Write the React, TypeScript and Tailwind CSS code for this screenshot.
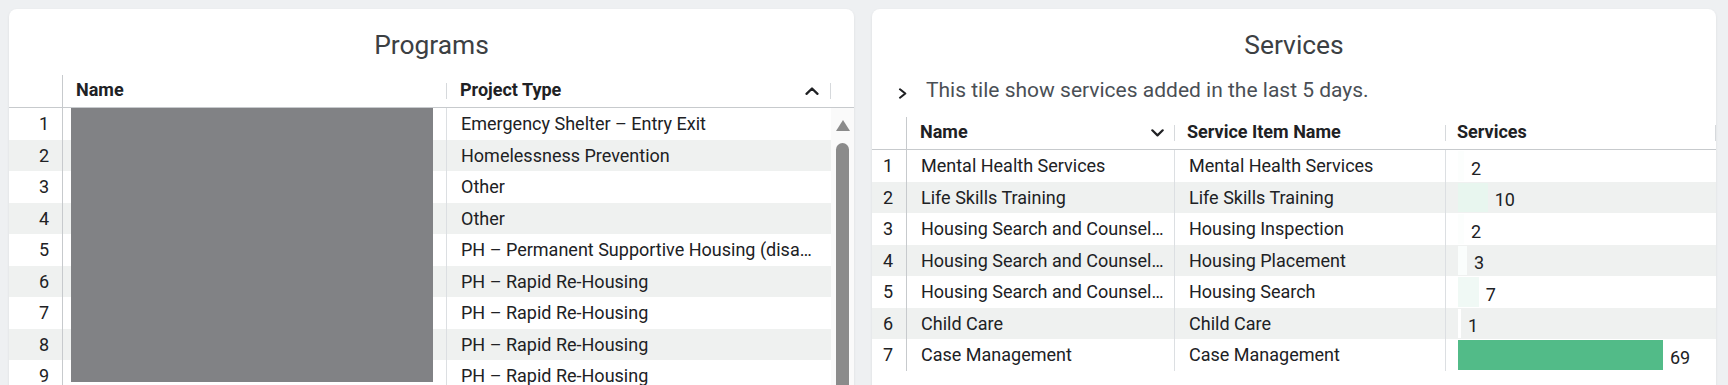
import React from 'react';

// Two dashboard tiles: Programs list and Services added in the last 5 days

const programTypes = [
    'Emergency Shelter – Entry Exit',
    'Homelessness Prevention',
    'Other',
    'Other',
    'PH – Permanent Supportive Housing (disability required for entry)',
    'PH – Rapid Re-Housing',
    'PH – Rapid Re-Housing',
    'PH – Rapid Re-Housing',
    'PH – Rapid Re-Housing',
];

const services = [
    { name: 'Mental Health Services', item: 'Mental Health Services', count: 2 },
    { name: 'Life Skills Training', item: 'Life Skills Training', count: 10 },
    { name: 'Housing Search and Counseling Services', item: 'Housing Inspection', count: 2 },
    { name: 'Housing Search and Counseling Services', item: 'Housing Placement', count: 3 },
    { name: 'Housing Search and Counseling Services', item: 'Housing Search', count: 7 },
    { name: 'Child Care', item: 'Child Care', count: 1 },
    { name: 'Case Management', item: 'Case Management', count: 69 },
];

const MAX_COUNT = 69;
const MIN_COUNT = 1;
const BAR_MAX_WIDTH = 205;

// white -> green scale, like the data bar colouring in the tile
const barColor = (value: number): string => {
    const t = (value - MIN_COUNT) / (MAX_COUNT - MIN_COUNT);
    const mix = (c: number) => Math.round(255 - (255 - c) * t);
    return `rgb(${mix(82)}, ${mix(187)}, ${mix(136)})`;
};

const ChevronUp = () => (
    <svg width="14" height="8" viewBox="0 0 14 8" fill="none">
        <path d="M1.5 6.8 7 1.5l5.5 5.3" stroke="#202124" strokeWidth="2.3" strokeLinecap="round" strokeLinejoin="round" />
    </svg>
);

const ChevronDown = () => (
    <svg width="13" height="8" viewBox="0 0 13 8" fill="none">
        <path d="M1.3 1.3 6.5 6.4l5.2-5.1" stroke="#202124" strokeWidth="2.2" strokeLinecap="round" strokeLinejoin="round" />
    </svg>
);

const ChevronRight = () => (
    <svg width="10" height="11" viewBox="0 0 10 11" fill="none">
        <path d="M2 1.3 7.3 5.5 2 9.7" stroke="#202124" strokeWidth="2.1" strokeLinecap="round" strokeLinejoin="round" />
    </svg>
);

const HeaderSep = () => <div className="w-px h-[16px] bg-[#d6d9dc] shrink-0 mt-[2px]" />;

const ProgramsTile = () => (
    <div className="w-[845px] h-[400px] shrink-0 rounded-lg bg-white shadow-[0_1px_3px_rgba(0,0,0,0.08)] overflow-hidden">
        <div className="h-[66px] pt-[20px] text-center text-[26.4px] leading-[32px] font-normal text-[#3c4043]">Programs</div>
        <div className="flex h-[33px] border-b border-[#c7cacd] text-[18px] font-bold text-[#202124]">
            <div className="w-[54px] border-r border-[#c7cacd]" />
            <div className="w-[384px] flex items-center justify-between pl-[13px] pb-[3px]">
                <span>Name</span>
                <HeaderSep />
            </div>
            <div className="w-[384px] flex items-center pl-[13px] pb-[3px]">
                <span className="flex-1">Project Type</span>
                <div className="mt-[2px]">
                    <ChevronUp />
                </div>
                <div className="ml-[11px]">
                    <HeaderSep />
                </div>
            </div>
        </div>
        <div className="flex">
            <div className="w-[822px] relative">
                {programTypes.map((type, i) => (
                    <div
                        key={i}
                        className={`flex h-[31.5px] text-[18px] text-[#202124] ${i % 2 === 1 ? 'bg-[#eff1f0]' : 'bg-white'}`}
                    >
                        <div className="w-[54px] border-r border-[#c7cacd] flex items-center justify-end pr-[13px]">{i + 1}</div>
                        <div className="w-[384px] border-r border-[#dcdfe2]" />
                        <div className="w-[384px] flex items-center pl-[14px] pr-[18px] min-w-0">
                            <span className="truncate">{type}</span>
                        </div>
                    </div>
                ))}
                {/* redacted name column */}
                <div className="absolute top-0 left-[62px] w-[362px] h-[274px] bg-[#818285]" />
            </div>
            <div className="w-[23px] bg-[#fafafa] flex flex-col items-center pt-[12px]">
                <div className="w-0 h-0 border-l-[7.5px] border-r-[7.5px] border-b-[11px] border-l-transparent border-r-transparent border-b-[#8b8b8b]" />
                <div className="mt-[12px] w-[13px] h-[260px] rounded-full bg-[#8b8b8b]" />
            </div>
        </div>
    </div>
);

const ServicesTile = () => (
    <div className="w-[844px] h-[400px] shrink-0 rounded-lg bg-white shadow-[0_1px_3px_rgba(0,0,0,0.08)] overflow-hidden">
        <div className="h-[66px] pt-[20px] text-center text-[26.4px] leading-[32px] font-normal text-[#3c4043]">Services</div>
        <div className="h-[42px] pt-[1px] flex items-start pl-[26px]">
            <div className="h-[28px] flex items-center pt-[7px]">
                <ChevronRight />
            </div>
            <span className="ml-[18px] text-[21px] leading-[28px] text-[#4a4f55]">This tile show services added in the last 5 days.</span>
        </div>
        <div className="flex h-[33px] border-b border-[#c7cacd] text-[18px] font-bold text-[#202124]">
            <div className="w-[35px] border-r border-[#c7cacd]" />
            <div className="w-[268px] flex items-center pl-[13px] pb-[3px]">
                <span className="flex-1">Name</span>
                <div className="mt-[2px]">
                    <ChevronDown />
                </div>
                <div className="ml-[10px]">
                    <HeaderSep />
                </div>
            </div>
            <div className="w-[271px] flex items-center justify-between pl-[12px] pb-[3px]">
                <span>Service Item Name</span>
                <HeaderSep />
            </div>
            <div className="w-[270px] flex items-center justify-between pl-[11px] pb-[3px]">
                <span>Services</span>
                <HeaderSep />
            </div>
        </div>
        {services.map((s, i) => (
            <div
                key={i}
                className={`flex h-[31.5px] text-[18px] text-[#202124] ${i % 2 === 1 ? 'bg-[#eff1f0]' : 'bg-white'}`}
            >
                <div className="w-[35px] border-r border-[#c7cacd] flex items-center justify-end pr-[13px]">{i + 1}</div>
                <div className="w-[268px] border-r border-[#dcdfe2] flex items-center pl-[14px] pr-[10px] min-w-0">
                    <span className="truncate">{s.name}</span>
                </div>
                <div className="w-[271px] border-r border-[#dcdfe2] flex items-center pl-[14px] pr-[12px] min-w-0">
                    <span className="truncate">{s.item}</span>
                </div>
                <div className="w-[270px] flex pl-[12px] py-[1px]">
                    <div
                        className="h-full"
                        style={{
                            width: `${Math.max(2, (s.count / MAX_COUNT) * BAR_MAX_WIDTH)}px`,
                            backgroundColor: barColor(s.count),
                        }}
                    />
                    <span className="self-end ml-[7px] leading-[20px] pb-[2px]">{s.count}</span>
                </div>
            </div>
        ))}
    </div>
);

export default function App() {
    return (
        <div className="w-[1728px] h-[385px] overflow-hidden bg-[#eef0f2] flex gap-[18px] pl-[9px] pt-[9px] font-[Roboto,sans-serif]">
            <ProgramsTile />
            <ServicesTile />
        </div>
    );
}
